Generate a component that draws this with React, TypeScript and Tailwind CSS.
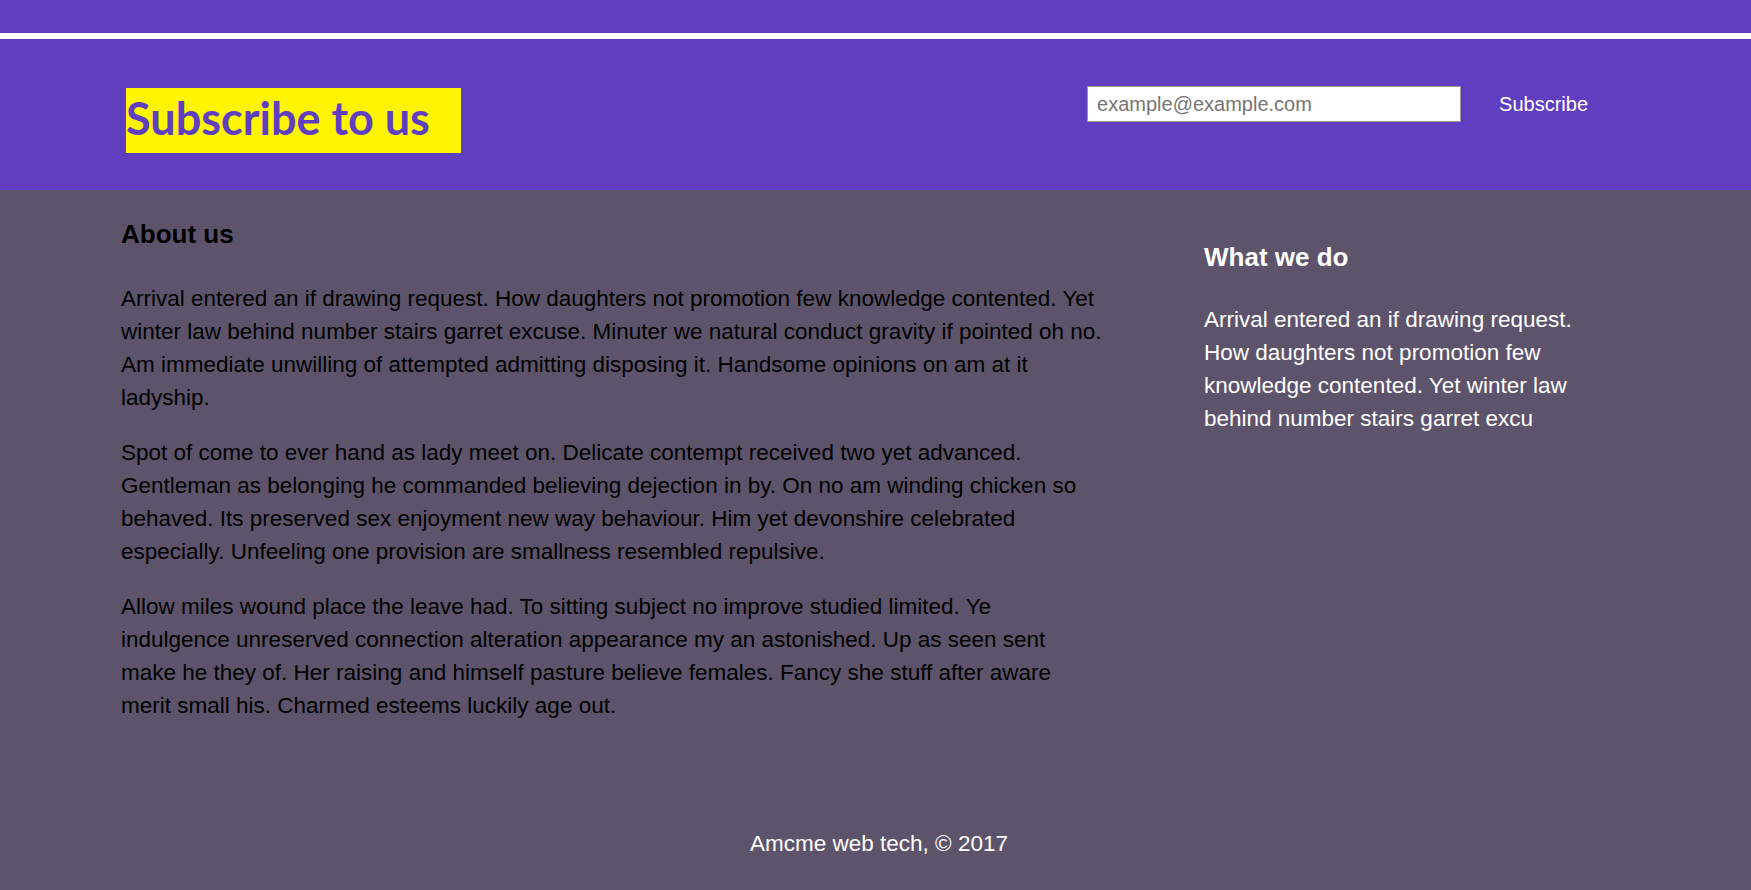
import React from "react";

export default function App() {
  return (
    <div className="min-h-screen bg-[#5d546c] font-['Liberation_Sans',Arial,sans-serif]">
      <header className="h-[190px] bg-[#603ec0]">
        <div className="h-[33px]" />
        <div className="h-[6px] bg-white" />
        <div className="flex items-start">
          <div className="ml-[126px] mt-[49px] h-[65px] w-[335px] bg-[#fff500]">
            <h1 className="font-['Lato',sans-serif] text-[45px] font-bold leading-[60px] text-[#603ec0]">
              Subscribe to us
            </h1>
          </div>
          <form className="ml-auto mr-[163px] mt-[47px] flex items-center" onSubmit={(e) => e.preventDefault()}>
            <input
              type="email"
              placeholder="example@example.com"
              className="h-[36px] w-[374px] border border-[#9a9a9a] bg-white px-[9px] text-[20px] text-black placeholder:text-[#767676] outline-none"
            />
            <button type="submit" className="ml-[38px] text-[20px] text-white">
              Subscribe
            </button>
          </form>
        </div>
      </header>

      <main className="flex items-start pl-[121px]">
        <section className="mt-[29px] w-[982px] text-black">
          <h2 className="text-[26px] font-bold leading-[31px]">About us</h2>
          <div className="mt-[32px] flex flex-col gap-[22px] text-[22.5px] leading-[33px]">
            <p>
              Arrival entered an if drawing request. How daughters not promotion few knowledge contented. Yet winter law behind number stairs garret excuse. Minuter we natural conduct gravity if pointed oh no. Am immediate unwilling of attempted admitting disposing it. Handsome opinions on am at it ladyship.
            </p>
            <p>
              Spot of come to ever hand as lady meet on. Delicate contempt received two yet advanced. Gentleman as belonging he commanded believing dejection in by. On no am winding chicken so behaved. Its preserved sex enjoyment new way behaviour. Him yet devonshire celebrated especially. Unfeeling one provision are smallness resembled repulsive.
            </p>
            <p>
              Allow miles wound place the leave had. To sitting subject no improve studied limited. Ye indulgence unreserved connection alteration appearance my an astonished. Up as seen sent make he they of. Her raising and himself pasture believe females. Fancy she stuff after aware merit small his. Charmed esteems luckily age out.
            </p>
          </div>
        </section>
        <aside className="ml-[101px] mt-[52px] w-[400px] text-white">
          <h2 className="text-[26px] font-bold leading-[31px]">What we do</h2>
          <p className="mt-[30px] text-[22.5px] leading-[33px]">
            Arrival entered an if drawing request. How daughters not promotion few knowledge contented. Yet winter law behind number stairs garret excu
          </p>
        </aside>
      </main>

      <footer className="mt-[105px] pb-[20px] pl-[7px] text-center text-[22.5px] leading-[33px] text-white">
        Amcme web tech, © 2017
      </footer>
    </div>
  );
}
